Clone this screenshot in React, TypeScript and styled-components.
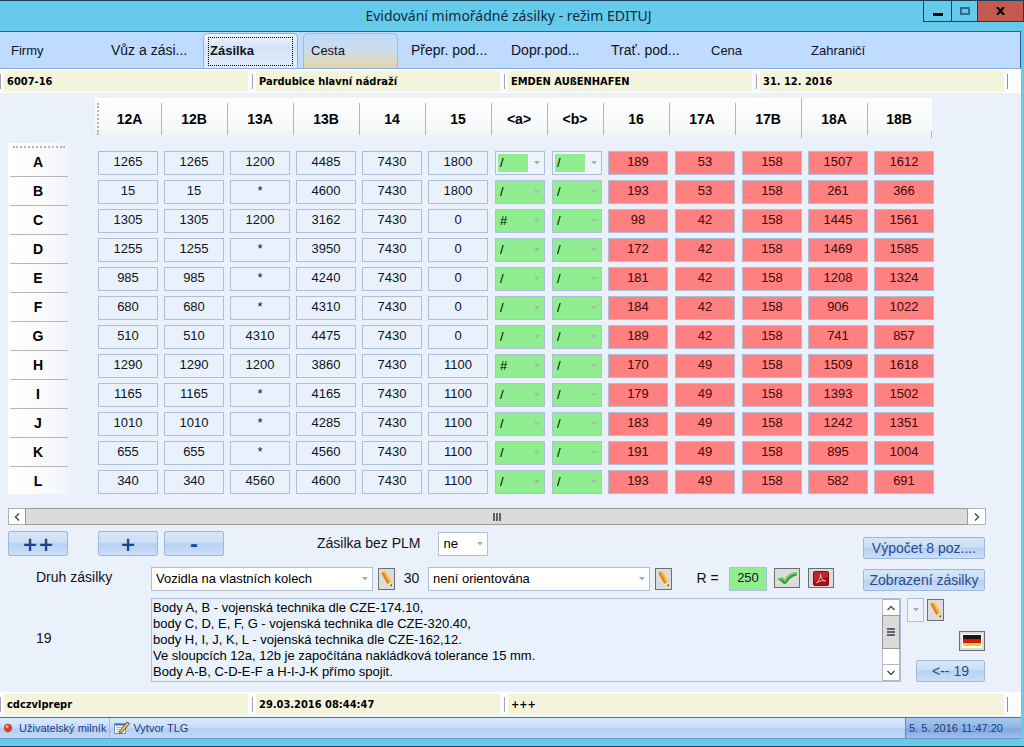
import React from 'react';
import styled, { createGlobalStyle, css } from 'styled-components';

const GlobalStyle = createGlobalStyle`
  * { box-sizing: border-box; }
  body {
    margin: 0;
    background: #66cbea;
    color: #10131c;
    font: 13px/16px "Liberation Sans", Arial, sans-serif;
  }
  button, input, select, textarea { font: inherit; color: inherit; margin: 0; border-radius: 0; }
`;

const Window = styled.div`
  display: flex;
  flex-direction: column;
  min-height: 100vh;
  border-top: 1px solid #17405a;
  border-bottom: 1px solid #1c4a66;
  background: #66cbea;
`;

const TitleBar = styled.header`
  display: grid;
  grid-template-columns: 1fr auto 1fr;
  height: 30px;
`;

const Title = styled.h1`
  grid-column: 2;
  margin: 0 7px 0 0;
  font: 400 14px/30px "Noto Sans", "Open Sans", sans-serif;
  color: #0d2a3c;
`;

const Caption = styled.div`
  justify-self: end;
  display: flex;
  height: 21px;
  border: solid #1d3c55;
  border-width: 0 0 1px 1px;
`;

const CaptionButton = styled.button<{ $w: number; $close?: boolean }>`
  width: ${p => p.$w}px;
  padding: 0;
  border: 0;
  border-right: 1px solid #1d3c55;
  background: ${p => (p.$close ? '#c4594f' : 'transparent')};
  display: flex;
  align-items: center;
  justify-content: center;
`;

const Client = styled.div`
  flex: 1;
  display: flex;
  flex-direction: column;
  margin: 0 3px 7px 0;
  border-top: 1px solid #2c5f94;
  background: #eaf1fb;
`;

const Tabs = styled.nav`
  display: flex;
  gap: 5px;
  height: 37px;
  padding: 1px 3px 0;
  background: #bfdbff;
  border-bottom: 1px solid #8fb0de;
  border-right: 1px solid #2c5f94;
`;

const Tab = styled.button<{ $state?: 'active' | 'hot'; $long?: boolean }>`
  width: 95px;
  padding: ${p => (p.$long ? '0 0 2px 7px' : '0 0 0 7px')};
  border: 1px solid transparent;
  border-bottom: 0;
  border-radius: 5px 5px 0 0;
  background: transparent;
  font-size: ${p => (p.$long ? 14 : 13)}px;
  text-align: left;
  white-space: nowrap;
  ${p => p.$state === 'hot' && css`
    border-color: #9dbbe4;
    background: linear-gradient(#c0daf8, #ccdcee 45%, #e0d8b8 85%, #dcd2a4);
  `}
  ${p => p.$state === 'active' && css`
    padding: 0 4px;
    border-color: #8fb0de;
    background: linear-gradient(#f0f5fc, #d5e3f5 40%, #e4edf9);
    font-weight: 700;
  `}
`;

const FocusFrame = styled.span`
  display: block;
  height: 29px;
  padding-left: 1px;
  border: 1px dotted #000;
  line-height: 26px;
`;

const Strip = styled.div`
  display: grid;
  grid-template-columns: repeat(4, 1fr);
  height: 24px;
  padding: 2px 13px 1px 0;
  background: linear-gradient(#8d93a0, #8d93a0) right 13px top 5px / 1px 15px no-repeat, #fbfcfd;
`;

const StripCell = styled.div<{ $wide?: boolean }>`
  grid-column: span ${p => (p.$wide ? 2 : 1)};
  padding: 0 4px;
  background: linear-gradient(#a3a6b0, #a3a6b0) 0 3px / 1px 15px no-repeat;
  font: 700 11px/21px "DejaVu Sans Condensed", Tahoma, sans-serif;
  color: #000;
`;

const StripText = styled.div`
  padding-left: 3px;
  background: #f4f4dc;
  white-space: nowrap;
`;

const Main = styled.main`
  flex: 1;
  padding: 5px 35px 10px 8px;
`;

const GridTable = styled.table`
  display: block;
  overflow: hidden;
  th, td { padding: 0; }
  thead, tbody { display: block; }
`;

const HeadRow = styled.tr`
  display: grid;
  grid-template-columns: 87px 67px repeat(5, 66px) repeat(2, 56px) repeat(4, 66px) 64px;
  height: 45px;
`;

const Head = styled.th<{ $tall?: boolean }>`
  height: 42px;
  && { padding-right: 2px; }
  background:
    linear-gradient(#b3b5b9, #b3b5b9) right ${p => (p.$tall ? '0' : '5px')} / 1px ${p => (p.$tall ? '40px' : '32px')} no-repeat,
    linear-gradient(#fff, #f8f9fa 60%, #eef1f6);
  font: 700 14px/42px "Liberation Sans", Arial, sans-serif;
  color: #000;
  &:last-child {
    border-radius: 0 3px 0 0;
    background:
      linear-gradient(#b3b5b9, #b3b5b9) right 33px / 1px 7px no-repeat,
      linear-gradient(#fff, #f8f9fa 60%, #eef1f6);
  }
`;

const Grip = styled.span`
  display: block;
  height: 32px;
  margin: 5px 0 0 2px;
  border-left: 2px dotted #b4b5b8;
  line-height: 32px;
`;

const Row = styled.tr`
  display: grid;
  grid-template-columns: 90px repeat(5, 66px) 67px 57px 56px repeat(2, 67px) repeat(2, 66px) 60px;
  align-items: end;
  height: 29px;
  &:first-child { height: 34px; }
`;

const RowHead = styled.th`
  align-self: stretch;
  display: flex;
  align-items: flex-end;
  justify-content: center;
  width: 63px;
  && { padding: 0 3px 7px 0; }
  background:
    linear-gradient(#b3b5b9, #b3b5b9) 2px 100% / 58px 1px no-repeat,
    linear-gradient(90deg, #fff, #f8f9fa 70%, #eef2f8);
  font: 700 14px/16px "Liberation Sans", Arial, sans-serif;
  color: #000;
  tr:last-child && {
    height: 27px;
    padding-bottom: 5px;
    background: linear-gradient(90deg, #fff, #f8f9fa 70%, #eef2f8);
  }
  tr:first-child &::before {
    content: "";
    align-self: flex-start;
    width: 52px;
    margin: 3px -32px 0 -20px;
    border-top: 2px dotted #b4b5b8;
  }
`;

const Cell = styled.td`
  height: 26px;
`;

const Value = styled.input<{ $tone?: 'red' | 'green'; $wide?: number }>`
  display: block;
  width: ${p => p.$wide ?? 60}px;
  height: 24px;
  padding: 0 0 3px;
  border: 1px solid #b0bfd9;
  background: ${p => (p.$tone === 'red' ? '#ff8080' : p.$tone === 'green' ? '#90ee90' : '#e9f2fc')};
  color: ${p => (p.$tone === 'red' ? '#400808' : '#10131c')};
  text-align: center;
`;

const Combo = styled.span<{ $w?: number }>`
  display: grid;
  align-items: center;
  ${p => (p.$w ? `width: ${p.$w}px;` : 'flex: 1 1 0; min-width: 0;')}
  height: 24px;
  > * { grid-area: 1 / 1; }
  > svg { justify-self: end; margin-right: 5px; pointer-events: none; }
`;

const Select = styled.select<{ $tone?: 'green' | 'part' | 'empty' }>`
  appearance: none;
  width: 100%;
  height: 24px;
  padding: 0 4px;
  border: 1px solid #b0bfd9;
  color: #000;
  background: ${p =>
    p.$tone === 'green' ? '#90ee90'
      : p.$tone === 'part' ? 'linear-gradient(#90ee90, #90ee90) 2px 2px / 30px 18px no-repeat, #eef4fc'
        : p.$tone === 'empty' ? '#eef3fc' : '#fff'};
`;

const Arrow = ({ color = '#a9adb5' }: { color?: string }) => (
  <svg width="6" height="4" viewBox="0 0 6 4" aria-hidden="true"><path d="M0 0h6L3 3.4z" fill={color} /></svg>
);

const HScroll = styled.div`
  display: flex;
  height: 17px;
  margin-top: 12px;
  border: 1px solid #b0b2b6;
  background: #fff;
`;

const ScrollButton = styled.button`
  flex: none;
  width: 16px;
  height: 15px;
  padding: 0;
  border: 0;
  background: #fff;
  display: flex;
  align-items: center;
  justify-content: center;
`;

const HThumb = styled.div`
  flex: 1;
  display: flex;
  align-items: center;
  justify-content: center;
  margin: -1px 1px -1px 0;
  border: 1px solid #9a9a9c;
  background: #dbdbdc;
`;

const Form = styled.div`
  display: flex;
  gap: 29px;
  margin: 6px 1px 0 0;
`;

const FormRows = styled.div`
  flex: 1;
  display: flex;
  flex-direction: column;
  gap: 11px;
`;

const FormRow = styled.div`
  display: flex;
  align-items: center;
  height: 25px;
  &:last-child { height: 24px; }
`;

const SideButtons = styled.div`
  display: flex;
  flex-direction: column;
  gap: 10px;
  width: 122px;
  padding-top: 6px;
`;

const Button = styled.button<{ $sign?: boolean }>`
  height: ${p => (p.$sign ? 25 : 22)}px;
  ${p => p.$sign && 'width: 60px;'}
  padding: 0;
  border: 1px solid #9cb8e0;
  border-radius: 2px;
  background: linear-gradient(#d6e6f8, #cbdff6 45%, #b7d2f1 50%, #c9def8);
  color: ${p => (p.$sign ? '#164490' : '#274b8c')};
  font: ${p => (p.$sign ? '700 19px/22px "DejaVu Sans", sans-serif' : '14px/20px "Liberation Sans", Arial, sans-serif')};
  white-space: nowrap;
`;

const SignGroup = styled.div`
  display: flex;
  gap: 6px;
  margin-left: 30px;
`;

const PlmLabel = styled.label`
  margin: 0 18px 0 93px;
  padding-bottom: 2px;
  font-size: 14px;
`;

const KindLabel = styled.label`
  flex: none;
  width: 143px;
  padding: 0 0 4px 28px;
  font-size: 14px;
`;

const Code = styled.label<{ $w: number }>`
  width: ${p => p.$w}px;
  flex: none;
  padding-bottom: 2px;
  text-align: center;
  font-size: 14px;
`;

const Ratio = styled(Code)`
  padding-left: 14px;
`;

const IconButton = styled.button<{ $wide?: boolean }>`
  flex: none;
  display: flex;
  align-items: center;
  justify-content: center;
  width: ${p => (p.$wide ? 26 : 17)}px;
  height: ${p => (p.$wide ? 20 : 22)}px;
  padding: 0;
  border: 1px solid #6d6e72;
  background: #dcdcdc;
`;

const Gap = styled.div`
  display: flex;
  gap: 8px;
  margin-left: 7px;
  padding-bottom: 2px;
`;

const Pick = styled.div`
  flex: 1 1 0;
  display: flex;
  align-items: center;
  gap: 5px;
`;

const NoteRow = styled.div`
  display: flex;
  align-items: flex-start;
  margin: 7px 1px 0 0;
`;

const NoteLabel = styled(KindLabel)`
  align-self: center;
`;

const NoteBox = styled.div`
  flex: 1;
  display: flex;
  height: 84px;
  border: 1px solid #b0bfd9;
  background: #e9f2fc;
`;

const Note = styled.textarea`
  flex: 1;
  height: 82px;
  padding: 1px;
  border: 0;
  background: transparent;
  color: #000;
  line-height: 16px;
  resize: none;
  overflow: hidden;
`;

const VScroll = styled.div`
  display: flex;
  flex-direction: column;
  width: 18px;
  border: 1px solid #b6b8bc;
  background: #fff;
`;

const VThumb = styled.div`
  flex: none;
  height: 34px;
  margin: 0 -1px;
  border: 1px solid #9a9a9c;
  background: #dbdbdc;
  display: flex;
  align-items: center;
  justify-content: center;
`;

const VTrack = styled.div`
  flex: 1;
  border-bottom: 1px solid #b6b8bc;
`;

const NoteSide = styled.div`
  display: flex;
  flex-direction: column;
  align-items: flex-end;
  gap: 9px;
  width: 84px;
  padding-left: 6px;
`;

const NoteTools = styled.div`
  display: flex;
  align-self: flex-start;
  align-items: center;
  gap: 3px;
`;

const BackButton = styled(Button)`
  width: 69px;
`;

const TaskBar = styled.footer`
  display: flex;
  align-items: stretch;
  height: 22px;
  margin-top: 1px;
  border-top: 1px solid #54749f;
  border-bottom: 1px solid #6d94c6;
  background: linear-gradient(#dceafd, #c9defa 45%, #b3cff2 55%, #c3daf8);
  color: #1b3a86;
  font-size: 11px;
  line-height: 20px;
`;

const TaskItem = styled.button`
  display: flex;
  align-items: center;
  gap: 6px;
  padding: 0 3px;
  border: 0;
  border-right: 1px solid #9dbce6;
  background: transparent;
  & + & { border-right: 0; gap: 3px; padding-left: 4px; }
`;

const Clock = styled.time`
  width: 116px;
  margin-left: auto;
  padding-left: 3px;
  border-left: 1px solid #5f86bb;
  background: linear-gradient(#a9c8ef, #8fb4e3 50%, #7fa6da 55%, #9fc0ec);
  white-space: nowrap;
`;

const Pencil = () => (
  <svg width="13" height="18" viewBox="0 0 13 18" aria-hidden="true">
    <path d="M1.5 3.2Q3 1 5.5 1.5L11.5 11.5 7.5 14z" fill="#f6a42c" />
    <path d="M1.5 3.2 2.9 2 9 13 7.5 14z" fill="#dc8412" />
    <path d="M4.2 1.3 5.5 1.5 11.5 11.5 10.2 12.3z" fill="#ffc45c" />
    <path d="M7.5 14 11.5 11.5 12 16.5z" fill="#f5dba6" />
    <path d="M9.8 15.2 11.8 14 12 16.5z" fill="#6a4a20" />
  </svg>
);

const Check = () => (
  <svg width="22" height="14" viewBox="0 0 22 14" aria-hidden="true">
    <path d="M1 8 6 6.3 8.5 8.5C11 4 15 1.5 20.5 1L21 4.5C16 5.5 12.5 8.5 10.5 12.5L8 13.3C6 11 4 9.2 1 8z" fill="#35a235" />
    <path d="M2 8 6 6.8 9 9.5C11.5 5 15.5 2.5 20.5 1.8" fill="none" stroke="#74d968" strokeWidth="1.6" />
  </svg>
);

const Pdf = () => (
  <svg width="16" height="15" viewBox="0 0 16 15" aria-hidden="true">
    <rect x=".5" y=".5" width="15" height="14" rx="1.5" fill="#a80f16" stroke="#7c0a10" />
    <path d="M1 1h14v5C9 6 5 8 1 11z" fill="#c2262e" />
    <path d="M3.5 12C6 10 7.8 6.5 7.5 3.5 8 7.5 9.5 9.3 12.5 10 9.5 9.2 6.5 9.7 3.5 12z" fill="none" stroke="#f3c9c9" strokeWidth=".9" strokeLinejoin="round" />
  </svg>
);

const Flag = () => (
  <svg width="20" height="14" viewBox="0 0 20 14" aria-hidden="true">
    <rect width="20" height="14" fill="#fff" />
    <path d="M1 1h18v4H1z" fill="#1c1512" />
    <path d="M1 5h18v4H1z" fill="#d01a12" />
    <path d="M1 9h18v3H1z" fill="#f6cf1c" />
  </svg>
);

const Chevron = ({ d }: { d: string }) => (
  <svg width="8" height="8" viewBox="0 0 8 8" aria-hidden="true"><path d={d} fill="none" stroke="#505256" strokeWidth="1.5" /></svg>
);

const Bars = ({ turned }: { turned?: boolean }) => (
  <svg width="8" height="8" viewBox="0 0 8 8" aria-hidden="true">
    <path d={turned ? 'M0 1h8M0 4h8M0 7h8' : 'M1 0v8M4 0v8M7 0v8'} stroke="#606266" strokeWidth="2" fill="none" />
  </svg>
);

const Dot = () => (
  <svg width="10" height="10" viewBox="0 0 10 10" aria-hidden="true">
    <circle cx="5" cy="5" r="4.2" fill="#c9472f" /><circle cx="4" cy="3.6" r="1.6" fill="#f0a38c" />
  </svg>
);

const NoteIcon = () => (
  <svg width="16" height="14" viewBox="0 0 16 14" aria-hidden="true">
    <path d="M.5 2.5h11v10H.5z" fill="#fff" stroke="#6f93c8" />
    <path d="M1 3h10v1.5H1z" fill="#3f6fc0" />
    <path d="M2.5 6.5h5M2.5 8.5h4M2.5 10.5h6" stroke="#8eaedb" />
    <path d="M6 9.5 13 1l2.500 1.5-7 8.500L5.500 12.500z" fill="#e8c35a" stroke="#3f3a2c" strokeWidth=".8" />
  </svg>
);

const columns = ['12A', '12B', '13A', '13B', '14', '15', '<a>', '<b>', '16', '17A', '17B', '18A', '18B'];

const rows: [string, string[]][] = [
  ['A', ['1265', '1265', '1200', '4485', '7430', '1800', '/', '/', '189', '53', '158', '1507', '1612']],
  ['B', ['15', '15', '*', '4600', '7430', '1800', '/', '/', '193', '53', '158', '261', '366']],
  ['C', ['1305', '1305', '1200', '3162', '7430', '0', '#', '/', '98', '42', '158', '1445', '1561']],
  ['D', ['1255', '1255', '*', '3950', '7430', '0', '/', '/', '172', '42', '158', '1469', '1585']],
  ['E', ['985', '985', '*', '4240', '7430', '0', '/', '/', '181', '42', '158', '1208', '1324']],
  ['F', ['680', '680', '*', '4310', '7430', '0', '/', '/', '184', '42', '158', '906', '1022']],
  ['G', ['510', '510', '4310', '4475', '7430', '0', '/', '/', '189', '42', '158', '741', '857']],
  ['H', ['1290', '1290', '1200', '3860', '7430', '1100', '#', '/', '170', '49', '158', '1509', '1618']],
  ['I', ['1165', '1165', '*', '4165', '7430', '1100', '/', '/', '179', '49', '158', '1393', '1502']],
  ['J', ['1010', '1010', '*', '4285', '7430', '1100', '/', '/', '183', '49', '158', '1242', '1351']],
  ['K', ['655', '655', '*', '4560', '7430', '1100', '/', '/', '191', '49', '158', '895', '1004']],
  ['L', ['340', '340', '4560', '4600', '7430', '1100', '/', '/', '193', '49', '158', '582', '691']],
];

const note = [
  'Body A, B - vojenská technika dle CZE-174.10,',
  'body C, D, E, F, G - vojenská technika dle CZE-320.40,',
  'body H, I, J, K, L - vojenská technika dle CZE-162,12.',
  'Ve sloupcích 12a, 12b je započítána nakládková tolerance 15 mm.',
  'Body A-B, C-D-E-F a H-I-J-K přímo spojit.',
].join('\n');

const isCombo = (i: number) => i === 6 || i === 7;

export default function App() {
  return (
    <>
      <GlobalStyle />
      <Window>
        <TitleBar>
          <Title>Evidování mimořádné zásilky - režim EDITUJ</Title>
          <Caption>
            <CaptionButton $w={28} aria-label="Minimalizovat">
              <svg width="10" height="12" viewBox="0 0 10 12"><path d="M0 8h10v3H0z" fill="#000" /></svg>
            </CaptionButton>
            <CaptionButton $w={26} aria-label="Maximalizovat">
              <svg width="10" height="8" viewBox="0 0 10 8"><path d="M1 1h8v6H1z" fill="none" stroke="#27708c" strokeWidth="2" /></svg>
            </CaptionButton>
            <CaptionButton $w={46} $close aria-label="Zavřít">
              <svg width="9" height="8" viewBox="0 0 9 8"><path d="M1 0l7 8M8 0L1 8" stroke="#000" strokeWidth="2.2" /></svg>
            </CaptionButton>
          </Caption>
        </TitleBar>

        <Client>
          <Tabs>
            <Tab>Firmy</Tab>
            <Tab $long>Vůz a zási...</Tab>
            <Tab $state="active"><FocusFrame>Zásilka</FocusFrame></Tab>
            <Tab $state="hot">Cesta</Tab>
            <Tab $long>Přepr. pod...</Tab>
            <Tab $long>Dopr.pod...</Tab>
            <Tab $long>Trať. pod...</Tab>
            <Tab>Cena</Tab>
            <Tab>Zahraničí</Tab>
          </Tabs>

          <Strip>
            {['6007-16', 'Pardubice hlavní nádraží', 'EMDEN AUßENHAFEN', '31. 12. 2016'].map(t => (
              <StripCell key={t}><StripText>{t}</StripText></StripCell>
            ))}
          </Strip>

          <Main>
            <GridTable>
              <thead>
                <HeadRow>
                  <td />
                  {columns.map((c, i) => (
                    <Head key={c} scope="col" $tall={c === '17B'}>
                      {i === 0 ? <Grip>{c}</Grip> : c}
                    </Head>
                  ))}
                </HeadRow>
              </thead>
              <tbody>
                {rows.map(([name, values], r) => (
                  <Row key={name}>
                    <RowHead scope="row">{name}</RowHead>
                    {values.map((v, i) => (
                      <Cell key={columns[i]}>
                        {isCombo(i) ? (
                          <Combo $w={50}>
                            <Select $tone={r === 0 ? 'part' : 'green'} defaultValue={v} aria-label={`${name} ${columns[i]}`}>
                              <option>/</option>
                              <option>#</option>
                            </Select>
                            <Arrow color={r === 0 ? '#a9adb5' : '#a3bda6'} />
                          </Combo>
                        ) : (
                          <Value $tone={i > 7 ? 'red' : undefined} defaultValue={v} aria-label={`${name} ${columns[i]}`} />
                        )}
                      </Cell>
                    ))}
                  </Row>
                ))}
              </tbody>
            </GridTable>

            <HScroll>
              <ScrollButton aria-label="Vlevo"><Chevron d="M6 .5 2.5 4 6 7.5" /></ScrollButton>
              <HThumb><Bars /></HThumb>
              <ScrollButton aria-label="Vpravo"><Chevron d="M2 .5 5.5 4 2 7.5" /></ScrollButton>
            </HScroll>

            <Form>
              <FormRows>
                <FormRow>
                  <Button $sign>++</Button>
                  <SignGroup>
                    <Button $sign>+</Button>
                    <Button $sign>-</Button>
                  </SignGroup>
                  <PlmLabel htmlFor="plm">Zásilka bez PLM</PlmLabel>
                  <Combo $w={50}>
                    <Select id="plm" defaultValue="ne"><option>ne</option><option>ano</option></Select>
                    <Arrow />
                  </Combo>
                </FormRow>
                <FormRow>
                  <KindLabel htmlFor="kind">Druh zásilky</KindLabel>
                  <Pick>
                    <Combo>
                      <Select id="kind"><option>Vozidla na vlastních kolech</option></Select>
                      <Arrow />
                    </Combo>
                    <IconButton aria-label="Upravit druh"><Pencil /></IconButton>
                  </Pick>
                  <Code $w={33} htmlFor="orientation">30</Code>
                  <Pick>
                    <Combo>
                      <Select id="orientation"><option>není orientována</option></Select>
                      <Arrow />
                    </Combo>
                    <IconButton aria-label="Upravit orientaci"><Pencil /></IconButton>
                  </Pick>
                  <Ratio $w={57} htmlFor="radius">R =</Ratio>
                  <Value id="radius" $tone="green" $wide={38} defaultValue="250" />
                  <Gap>
                    <IconButton $wide aria-label="Potvrdit"><Check /></IconButton>
                    <IconButton $wide aria-label="PDF"><Pdf /></IconButton>
                  </Gap>
                </FormRow>
              </FormRows>
              <SideButtons>
                <Button>Výpočet 8 poz....</Button>
                <Button>Zobrazení zásilky</Button>
              </SideButtons>
            </Form>

            <NoteRow>
              <NoteLabel htmlFor="note">19</NoteLabel>
              <NoteBox>
                <Note id="note" defaultValue={note} spellCheck={false} />
                <VScroll>
                  <ScrollButton aria-label="Nahoru"><Chevron d="M.5 6 4 2.5 7.5 6" /></ScrollButton>
                  <VThumb><Bars turned /></VThumb>
                  <VTrack />
                  <ScrollButton aria-label="Dolů"><Chevron d="M.5 2 4 5.5 7.5 2" /></ScrollButton>
                </VScroll>
              </NoteBox>
              <NoteSide>
                <NoteTools>
                  <Combo $w={17}>
                    <Select $tone="empty" aria-label="Vzor textu"><option></option></Select>
                    <Arrow />
                  </Combo>
                  <IconButton aria-label="Upravit vzor"><Pencil /></IconButton>
                </NoteTools>
                <IconButton $wide aria-label="Německy"><Flag /></IconButton>
                <BackButton>&lt;-- 19</BackButton>
              </NoteSide>
            </NoteRow>
          </Main>

          <Strip>
            <StripCell><StripText>cdczvlprepr</StripText></StripCell>
            <StripCell><StripText>29.03.2016 08:44:47</StripText></StripCell>
            <StripCell $wide><StripText>+++</StripText></StripCell>
          </Strip>

          <TaskBar>
            <TaskItem><Dot />Uživatelský milník</TaskItem>
            <TaskItem><NoteIcon />Vytvor TLG</TaskItem>
            <Clock>5. 5. 2016 11:47:20</Clock>
          </TaskBar>
        </Client>
      </Window>
    </>
  );
}
